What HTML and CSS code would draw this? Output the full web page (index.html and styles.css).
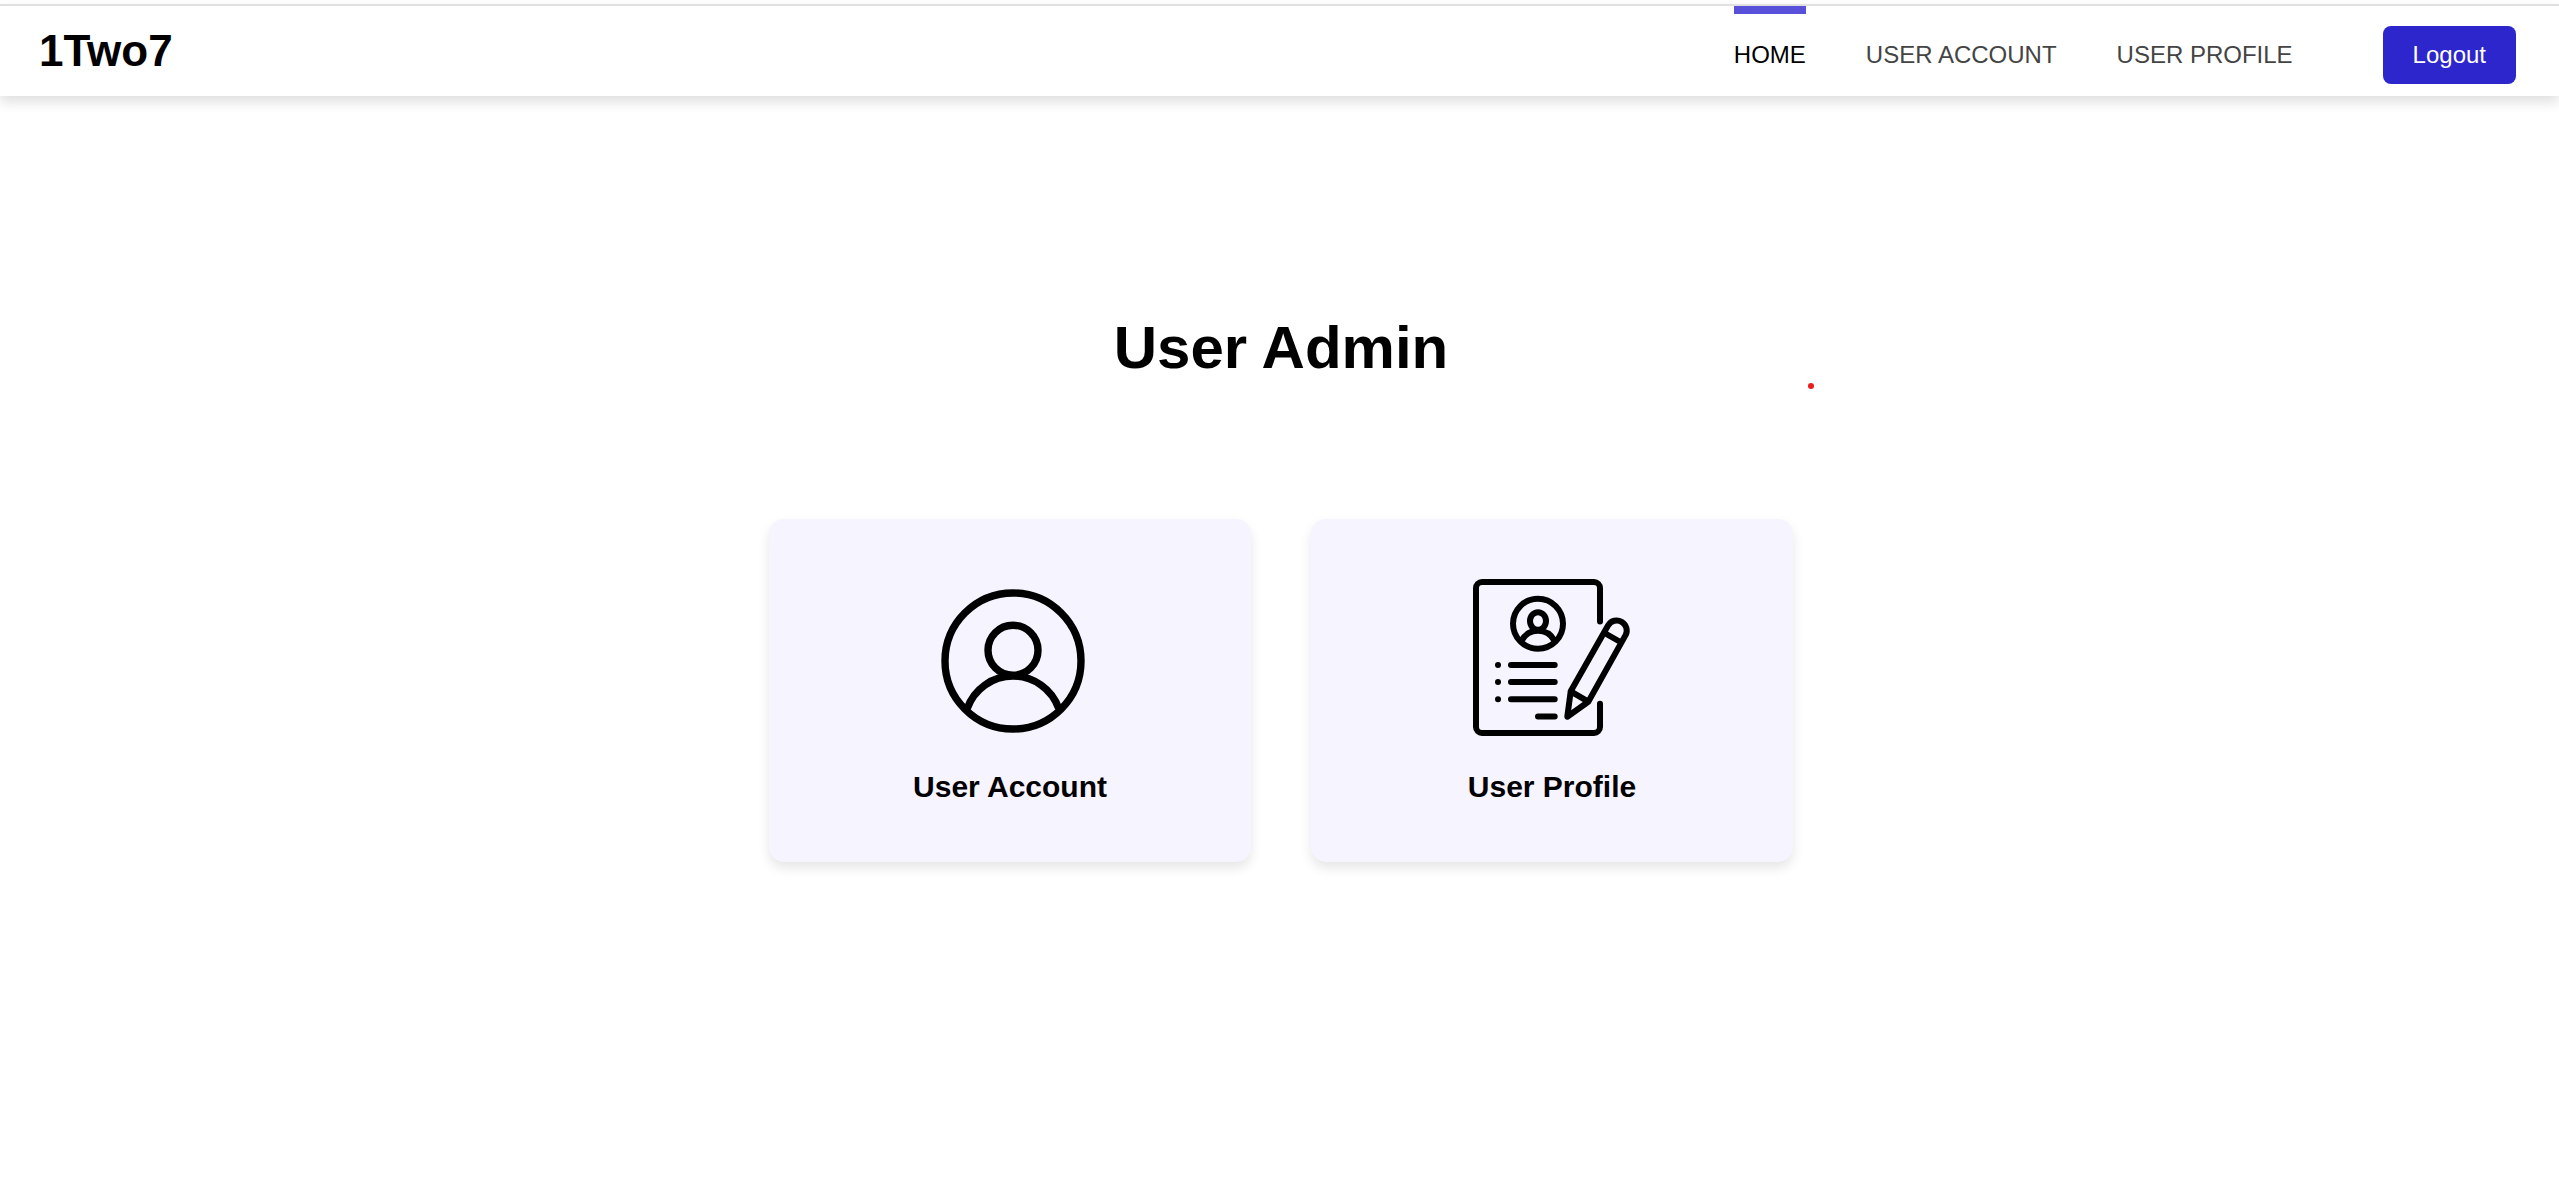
FILE: index.html
```html
<!DOCTYPE html>
<html lang="en">
<head>
  <meta charset="utf-8">
  <meta name="viewport" content="width=device-width, initial-scale=1">
  <title>User Admin</title>
  <link rel="stylesheet" href="styles.css">
</head>
<body>
  <header class="header">
    <div class="logo">1Two7</div>
    <nav class="nav">
      <a class="nav-link active" href="#">HOME</a>
      <a class="nav-link" href="#account">USER ACCOUNT</a>
      <a class="nav-link" href="#profile">USER PROFILE</a>
    </nav>
    <button class="logout" type="button">Logout</button>
  </header>

  <main class="main">
    <h1 class="title">User Admin</h1>
    <span class="dot"></span>
    <div class="cards">
      <a class="card" id="account" href="#account">
        <svg class="icon" viewBox="0 0 158 158" stroke-width="7.4" aria-hidden="true">
          <circle cx="82" cy="82" r="68"/>
          <circle cx="82" cy="71.2" r="25"/>
          <path d="M36.3 129.3A48.5 48.5 0 0 1 127.7 129.3"/>
        </svg>
        <span class="card-label">User Account</span>
      </a>
      <a class="card" id="profile" href="#profile">
        <svg class="icon" viewBox="0 0 158 158" stroke-width="6" stroke-linecap="round" stroke-linejoin="round" aria-hidden="true">
          <path d="M127 42.5V9a6 6 0 0 0-6-6H9a6 6 0 0 0-6 6V148a6 6 0 0 0 6 6H121a6 6 0 0 0 6-6V124.7"/>
          <circle cx="65" cy="44.7" r="25"/>
          <ellipse cx="65" cy="42" rx="8" ry="8.8"/>
          <path d="M48.7 61.5A18.6 18.6 0 0 1 81.3 61.5"/>
          <path d="M25 86h.01M25 103h.01M25 120.2h.01M38 86H81.7M38 103H81.7M38 120.2H81.7M65 137.4H81.7"/>
          <path d="M97.7 112.3L135.3 46.1A10 10 0 0 1 152.7 55.9L115.3 122.7L94.3 137.7ZM97.7 112.3L115.3 122.7M131.5 54L148.3 63.5"/>
        </svg>
        <span class="card-label">User Profile</span>
      </a>
    </div>
  </main>
</body>
</html>
```

FILE: styles.css
```css
* {
  box-sizing: border-box;
}

body {
  margin: 0;
  padding-top: 4px;
  background: #fff;
  color: #000;
  font-family: Arial, "Liberation Sans", sans-serif;
}

.header {
  display: flex;
  align-items: stretch;
  height: 92px;
  padding: 0 43px 0 39px;
  border-top: 2px solid #e0e0e0;
  background: #fff;
  box-shadow: 0 6px 12px rgba(0, 0, 0, 0.13);
}

.logo {
  margin-right: auto;
  font-size: 44px;
  font-weight: bold;
  line-height: 90px;
}

.nav {
  display: flex;
  gap: 60px;
  margin-right: 90px;
}

.nav-link {
  border-top: 8px solid transparent;
  color: #444;
  font-size: 24px;
  line-height: 82px;
  text-decoration: none;
}

.nav-link.active {
  border-top-color: #5850d8;
  color: #000;
}

.logout {
  align-self: flex-start;
  height: 58px;
  margin-top: 20px;
  padding: 0 30px;
  border: 0;
  border-radius: 8px;
  background: #2d26cc;
  color: #fff;
  font-family: inherit;
  font-size: 24px;
  cursor: pointer;
}

.main {
  position: relative;
  padding: 222px 24px 60px 27px;
}

.title {
  margin: 0 0 141px;
  font-size: 60px;
  line-height: 60px;
  text-align: center;
}

.dot {
  position: absolute;
  top: 287px;
  left: calc(50% + 528px);
  width: 6px;
  height: 6px;
  border-radius: 50%;
  background: #e81c1c;
}

.cards {
  display: flex;
  flex-wrap: wrap;
  justify-content: center;
  gap: 60px;
}

.card {
  display: flex;
  flex-direction: column;
  align-items: center;
  gap: 35px;
  width: 482px;
  padding: 60px;
  border-radius: 15px;
  background: #f6f4ff;
  box-shadow: 0 6px 12px rgba(0, 0, 0, 0.1);
  color: #000;
  text-decoration: none;
}

.icon {
  width: 158px;
  height: 158px;
  fill: none;
  stroke: #000;
}

.card-label {
  font-size: 30px;
  font-weight: bold;
  line-height: 30px;
}
```
